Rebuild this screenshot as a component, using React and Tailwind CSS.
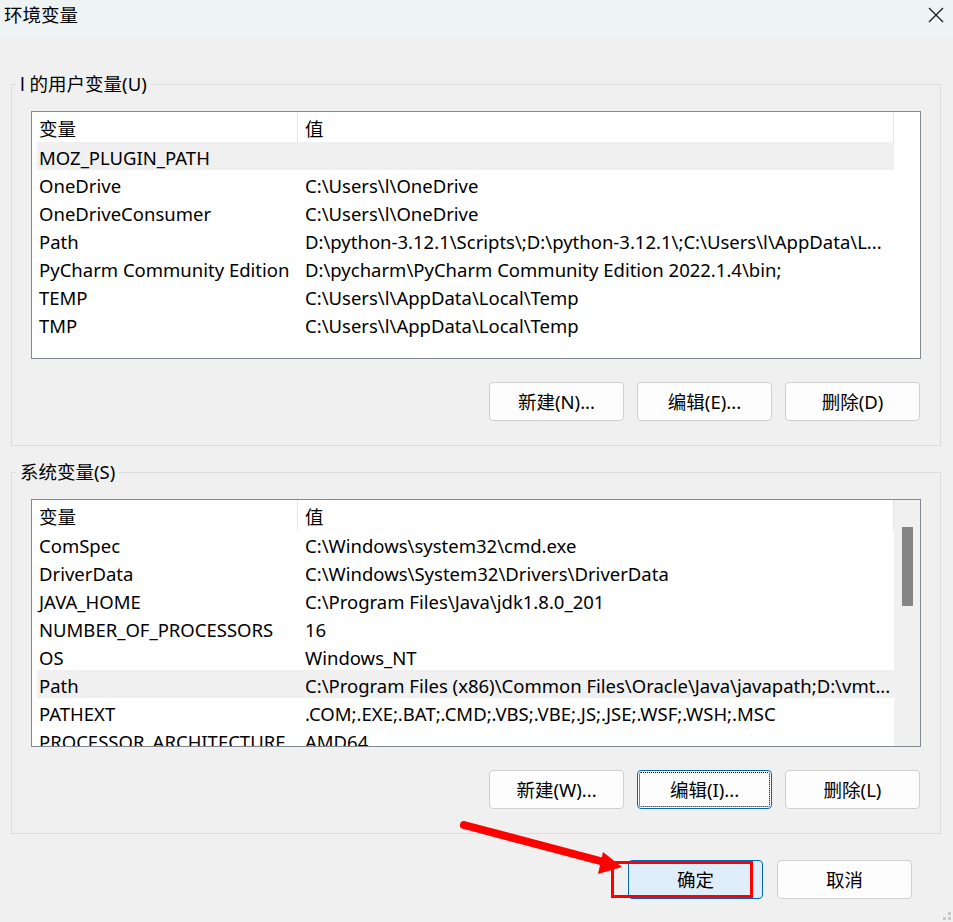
import React from 'react';

const FONT = { fontFamily: '"Noto Sans", "Noto Sans CJK SC", sans-serif' };

const userVars = [
  ['MOZ_PLUGIN_PATH', ''],
  ['OneDrive', 'C:\\Users\\l\\OneDrive'],
  ['OneDriveConsumer', 'C:\\Users\\l\\OneDrive'],
  ['Path', 'D:\\python-3.12.1\\Scripts\\;D:\\python-3.12.1\\;C:\\Users\\l\\AppData\\L...'],
  ['PyCharm Community Edition', 'D:\\pycharm\\PyCharm Community Edition 2022.1.4\\bin;'],
  ['TEMP', 'C:\\Users\\l\\AppData\\Local\\Temp'],
  ['TMP', 'C:\\Users\\l\\AppData\\Local\\Temp'],
];

const sysVars = [
  ['ComSpec', 'C:\\Windows\\system32\\cmd.exe'],
  ['DriverData', 'C:\\Windows\\System32\\Drivers\\DriverData'],
  ['JAVA_HOME', 'C:\\Program Files\\Java\\jdk1.8.0_201'],
  ['NUMBER_OF_PROCESSORS', '16'],
  ['OS', 'Windows_NT'],
  ['Path', 'C:\\Program Files (x86)\\Common Files\\Oracle\\Java\\javapath;D:\\vmt...'],
  ['PATHEXT', '.COM;.EXE;.BAT;.CMD;.VBS;.VBE;.JS;.JSE;.WSF;.WSH;.MSC'],
  ['PROCESSOR_ARCHITECTURE', 'AMD64'],
];

function VarList({ rows, selected, scrollbar }) {
  return (
    <div className="flex h-[248px] w-[890px] overflow-hidden border border-[#828790] bg-white">
      <div className="flex w-[862px] flex-col">
        {/* header */}
        <div className="flex h-[30px] shrink-0 items-center">
          <div className="flex h-full w-[266px] items-center border-r border-[#e5e5e5] pl-[7px] pt-[4px]">变量</div>
          <div className="flex h-full flex-1 items-center border-r border-[#e5e5e5] pl-[7px] pt-[4px]">值</div>
        </div>
        {rows.map(([name, value], i) => (
          <div
            key={name}
            className={`ml-[5px] flex h-[28px] shrink-0 items-center pt-[4px] ${i === selected ? 'bg-[#f0f0f0]' : ''}`}
          >
            <div className="w-[261px] shrink-0 whitespace-nowrap pl-[2px]">{name}</div>
            <div className="flex-1 overflow-hidden whitespace-nowrap pl-[7px]">{value}</div>
          </div>
        ))}
      </div>
      {scrollbar ? (
        <div className="flex w-[26px] justify-center bg-[#f0f0f0] pt-[27px]">
          <div className="h-[79px] w-[11px] bg-[#858585]" />
        </div>
      ) : (
        <div className="w-[26px]" />
      )}
    </div>
  );
}

function Button({ children, focused, primary }) {
  return (
    <button
      className={`flex h-[39px] w-[135px] items-center justify-center rounded-[4px] border pt-[1px] ${
        primary
          ? 'border-[#0067c0] bg-[#e0eef9]'
          : focused
          ? 'border-[#0067c0] bg-[#fdfdfd] outline-1 -outline-offset-3 outline-dotted outline-black'
          : 'border-[#d0d0d0] bg-[#fdfdfd]'
      } text-[18.5px] text-black`}
      style={FONT}
    >
      {children}
    </button>
  );
}

function Group({ label, children }) {
  return (
    <fieldset className="mx-[11px] w-[930px] border border-[#dcdcdc] px-[19px] pb-[24px]">
      <legend className="ml-[-15px] px-[4px] text-[18.5px] leading-[24px]">{label}</legend>
      {children}
    </fieldset>
  );
}

export default function App() {
  return (
    <div className="relative flex h-[922px] w-[953px] flex-col bg-[#f0f0f0] text-[18.5px] text-black" style={FONT}>
      {/* title bar */}
      <div className="flex h-[37px] shrink-0 items-center justify-between bg-[#eef3f4] pl-[4px] pr-[9px]">
        <span className="mb-[6px] leading-none">环境变量</span>
        <svg width="16" height="16" viewBox="0 0 16 16" className="mb-[7px]">
          <path d="M1 1 L15 15 M15 1 L1 15" stroke="#1a1a1a" strokeWidth="1.3" />
        </svg>
      </div>

      <div className="mt-[35px]">
        <Group label="l 的用户变量(U)">
          <div className="mt-[15px]">
            <VarList rows={userVars} selected={0} />
          </div>
          <div className="mt-[23px] flex justify-end gap-[13px] pr-[1px]">
            <Button>新建(N)...</Button>
            <Button>编辑(E)...</Button>
            <Button>删除(D)</Button>
          </div>
        </Group>
      </div>

      <div className="mt-[14px]">
        <Group label="系统变量(S)">
          <div className="mt-[15px]">
            <VarList rows={sysVars} selected={5} scrollbar />
          </div>
          <div className="mt-[23px] flex justify-end gap-[13px] pr-[1px]">
            <Button>新建(W)...</Button>
            <Button focused>编辑(I)...</Button>
            <Button>删除(L)</Button>
          </div>
        </Group>
      </div>

      <div className="mt-[26px] flex justify-end gap-[14px] pr-[41px]">
        <Button primary>确定</Button>
        <Button>取消</Button>
      </div>

      {/* resize grip */}
      <div className="absolute bottom-[2px] right-[2px] grid grid-cols-2 gap-[2px]">
        <span />
        <span className="h-[3px] w-[3px] bg-[#c8c8c8]" />
        <span className="h-[3px] w-[3px] bg-[#c8c8c8]" />
        <span className="h-[3px] w-[3px] bg-[#c8c8c8]" />
      </div>

      {/* red annotation */}
      <div className="pointer-events-none absolute left-[611px] top-[861px] h-[37px] w-[142px] border-[3px] border-[#ff0000]" />
      <svg className="pointer-events-none absolute left-0 top-0" width="953" height="922">
        <line x1="464" y1="825" x2="604" y2="862" stroke="#ff0000" strokeWidth="8" strokeLinecap="round" />
        <polygon points="603,852 622,867 598,874" fill="#ff0000" />
      </svg>
    </div>
  );
}
